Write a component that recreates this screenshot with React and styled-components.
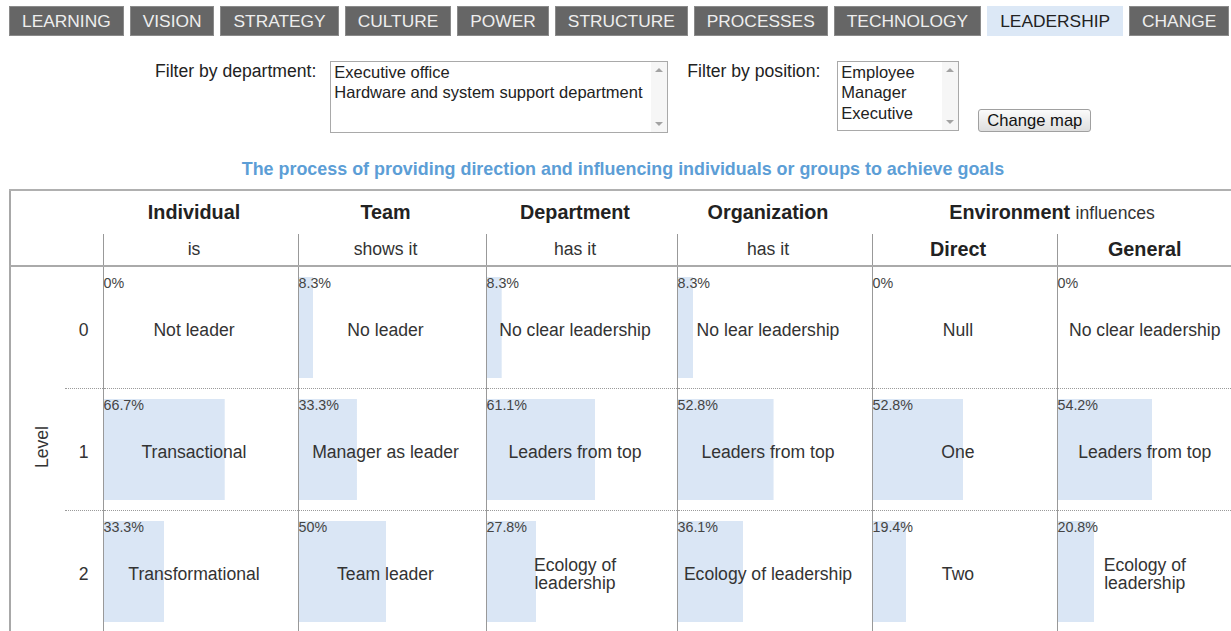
import React from 'react';
import styled, { createGlobalStyle } from 'styled-components';

// page content, copied from the map
const tabs = ['LEARNING', 'VISION', 'STRATEGY', 'CULTURE', 'POWER', 'STRUCTURE', 'PROCESSES', 'TECHNOLOGY', 'LEADERSHIP', 'CHANGE'];
const departments = ['Executive office', 'Hardware and system support department'];
const positions = ['Employee', 'Manager', 'Executive'];

const columns = [
  { key: 'individual', width: 195, sub: 'is', cells: [
    { pct: 0, text: '0%', label: 'Not leader' },
    { pct: 66.7, text: '66.7%', label: 'Transactional' },
    { pct: 33.3, text: '33.3%', label: 'Transformational' },
  ] },
  { key: 'team', width: 188, sub: 'shows it', cells: [
    { pct: 8.3, text: '8.3%', label: 'No leader' },
    { pct: 33.3, text: '33.3%', label: 'Manager as leader' },
    { pct: 50, text: '50%', label: 'Team leader' },
  ] },
  { key: 'department', width: 191, sub: 'has it', cells: [
    { pct: 8.3, text: '8.3%', label: 'No clear leadership' },
    { pct: 61.1, text: '61.1%', label: 'Leaders from top' },
    { pct: 27.8, text: '27.8%', label: 'Ecology of\nleadership' },
  ] },
  { key: 'organization', width: 195, sub: 'has it', cells: [
    { pct: 8.3, text: '8.3%', label: 'No lear leadership' },
    { pct: 52.8, text: '52.8%', label: 'Leaders from top' },
    { pct: 36.1, text: '36.1%', label: 'Ecology of leadership' },
  ] },
  { key: 'direct', width: 185, sub: 'Direct', strong: true, cells: [
    { pct: 0, text: '0%', label: 'Null' },
    { pct: 52.8, text: '52.8%', label: 'One' },
    { pct: 19.4, text: '19.4%', label: 'Two' },
  ] },
  { key: 'general', width: 188, sub: 'General', strong: true, cells: [
    { pct: 0, text: '0%', label: 'No clear leadership' },
    { pct: 54.2, text: '54.2%', label: 'Leaders from top' },
    { pct: 20.8, text: '20.8%', label: 'Ecology of\nleadership' },
  ] },
];

const GlobalStyle = createGlobalStyle`
  html, body {
    margin: 0;
    padding: 0;
    overflow: hidden;
    background: #fff;
  }
  body {
    font-family: "Liberation Sans", Arial, sans-serif;
    color: #333;
  }
`;

const Page = styled.div`
  width: 1246px;
`;

const Nav = styled.nav`
  display: flex;
  gap: 6px;
  padding: 6px 0 0 9px;
`;

const Tab = styled.a`
  display: flex;
  align-items: center;
  height: 30px;
  box-sizing: border-box;
  padding: 0 12px;
  font-size: 17.35px;
  text-decoration: none;
  background: ${p => (p.$active ? '#dce8f6' : '#666')};
  color: ${p => (p.$active ? '#222' : '#eee')};
  border: 1px solid ${p => (p.$active ? '#dce8f6' : '#8a8a8a')};
`;

const Filters = styled.div`
  display: flex;
  align-items: flex-start;
  margin-top: 25px;
  padding-left: 155px;
`;

const FilterLabel = styled.label`
  font-size: 17.6px;
  line-height: 20px;
  color: #222;
  margin: 0 ${p => p.$gap}px 0 ${p => p.$lead}px;
`;

const ListBox = styled.div`
  display: flex;
  width: ${p => p.$w}px;
  height: ${p => p.$h}px;
  box-sizing: border-box;
  border: 1px solid #a9a9a9;
  background: #fff;
`;

const Options = styled.div`
  flex: 1;
  padding: 0 3px;
`;

const Option = styled.div`
  font-size: 16.5px;
  line-height: 20.4px;
  color: #222;
  white-space: nowrap;
`;

const Scrollbar = styled.div`
  width: 16px;
  display: flex;
  flex-direction: column;
  justify-content: space-between;
  align-items: center;
  padding: 6px 0;
  background: #f6f6f6;
`;

const Arrow = styled.span`
  width: 0;
  height: 0;
  border-left: 4px solid transparent;
  border-right: 4px solid transparent;
  ${p => (p.$down ? 'border-top: 4px solid #a3a3a3;' : 'border-bottom: 4px solid #a3a3a3;')}
`;

const Button = styled.button`
  margin: 48px 0 0 19px;
  height: 23px;
  padding: 0 8px;
  font-family: inherit;
  font-size: 16.6px;
  color: #111;
  border: 1px solid #a0a0a0;
  border-radius: 3px;
  background: linear-gradient(#fbfbfb, #dedede);
`;

const Subtitle = styled.h2`
  margin: 26px 0 0;
  text-align: center;
  font-size: 17.9px;
  line-height: 20px;
  font-weight: bold;
  color: #5c9ed6;
`;

const Table = styled.table`
  margin: 10px 0 0 9px;
  width: 1235px;
  table-layout: fixed;
  border-collapse: collapse;
  border-top: 2px solid #b0b0b0;
  border-left: 2px solid #a8a8a8;
`;

const HeadRow = styled.tr`
  height: ${p => p.$h}px;
`;

const Head = styled.th`
  padding: 0 13px 0 0;
  vertical-align: middle;
  text-align: center;
  font-size: ${p => (p.$strong ? '19.8px' : '17.6px')};
  font-weight: ${p => (p.$strong ? 'bold' : 'normal')};
  color: ${p => (p.$strong ? '#222' : '#333')};
  border-left: ${p => (p.$line ? '1px solid #999' : 'none')};
  border-bottom: ${p => (p.$under ? '2px solid #aaa' : 'none')};
`;

const Note = styled.span`
  font-size: 17.6px;
  font-weight: normal;
  color: #333;
`;

const LevelCell = styled.td`
  padding: 0 0 0 8px;
  text-align: center;
  vertical-align: middle;
  font-size: 17.6px;
`;

const Vertical = styled.span`
  display: inline-block;
  writing-mode: vertical-rl;
  transform: rotate(180deg);
`;

const NumCell = styled.td`
  padding: 5px 0 0;
  text-align: center;
  vertical-align: middle;
  font-size: 17.6px;
  border-top: ${p => (p.$first ? 'none' : '1px dotted #9a9a9a')};
`;

const DataCell = styled.td`
  padding: 10px 13px 10px 0;
  vertical-align: top;
  border-left: 1px solid #999;
  border-top: ${p => (p.$first ? 'none' : '1px dotted #9a9a9a')};
`;

const Bar = styled.div`
  display: grid;
  height: 101px;
  background-image: linear-gradient(#dae6f5, #dae6f5);
  background-repeat: no-repeat;
`;

const Percent = styled.span`
  grid-area: 1 / 1;
  justify-self: start;
  align-self: start;
  font-size: 14.3px;
  line-height: 13px;
  color: #444;
`;

const Label = styled.span`
  grid-area: 1 / 1;
  justify-self: center;
  align-self: center;
  padding-top: 5px;
  text-align: center;
  white-space: pre-line;
  font-size: 17.6px;
  line-height: 18px;
  color: #333;
`;

const SelectBox = ({ items, w, h }) => (
  <ListBox $w={w} $h={h}>
    <Options>
      {items.map(item => <Option key={item}>{item}</Option>)}
    </Options>
    <Scrollbar>
      <Arrow />
      <Arrow $down />
    </Scrollbar>
  </ListBox>
);

const App = () => (
  <Page>
    <GlobalStyle />
    <Nav>
      {tabs.map(t => <Tab key={t} $active={t === 'LEADERSHIP'}>{t}</Tab>)}
    </Nav>

    <Filters>
      <FilterLabel $lead={0} $gap={14}>Filter by department:</FilterLabel>
      <SelectBox items={departments} w={338} h={72} />
      <FilterLabel $lead={19} $gap={17}>Filter by position:</FilterLabel>
      <SelectBox items={positions} w={122} h={70} />
      <Button>Change map</Button>
    </Filters>

    <Subtitle>The process of providing direction and influencing individuals or groups to achieve goals</Subtitle>

    <Table>
      <colgroup>
        <col style={{ width: 55 }} />
        <col style={{ width: 38 }} />
        {columns.map(c => <col key={c.key} style={{ width: c.width }} />)}
      </colgroup>
      <thead>
        <HeadRow $h={44}>
          <Head colSpan={2} />
          <Head $strong>Individual</Head>
          <Head $strong>Team</Head>
          <Head $strong>Department</Head>
          <Head $strong>Organization</Head>
          <Head $strong colSpan={2}>Environment <Note>influences</Note></Head>
        </HeadRow>
        <HeadRow $h={32}>
          <Head colSpan={2} $under />
          {columns.map(c => (
            <Head key={c.key} $line $under $strong={c.strong}>{c.sub}</Head>
          ))}
        </HeadRow>
      </thead>
      <tbody>
        {[0, 1, 2].map(level => (
          <tr key={level}>
            {level === 0 && (
              <LevelCell rowSpan={3}><Vertical>Level</Vertical></LevelCell>
            )}
            <NumCell $first={level === 0}>{level}</NumCell>
            {columns.map(c => {
              const cell = c.cells[level];
              return (
                <DataCell key={c.key} $first={level === 0}>
                  <Bar style={{ backgroundSize: `${cell.pct}% 100%` }}>
                    <Percent>{cell.text}</Percent>
                    <Label>{cell.label}</Label>
                  </Bar>
                </DataCell>
              );
            })}
          </tr>
        ))}
      </tbody>
    </Table>
  </Page>
);

export default App;
